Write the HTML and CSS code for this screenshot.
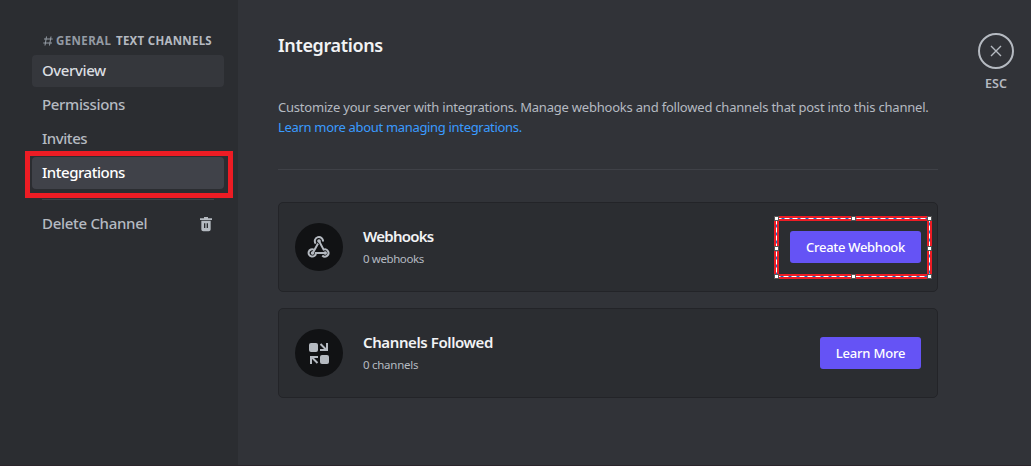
FILE: index.html
```html
<!DOCTYPE html>
<html lang="en">
<head>
<meta charset="utf-8">
<title>Integrations</title>
<link rel="stylesheet" href="styles.css">
</head>
<body>
<div class="app">
  <nav class="sidebar">
    <div class="channel"><svg class="hash" width="10" height="10" viewBox="0 0 10 10"><path d="M3.500 .5 2 9.500M8 .5 6.500 9.500M1 3h8.700M.3 7H9"/></svg><span class="name">GENERAL</span><span class="category">TEXT CHANNELS</span></div>
    <a class="item hovered"><span class="t-overview">Overview</span></a>
    <a class="item"><span class="t-permissions">Permissions</span></a>
    <a class="item"><span class="t-invites">Invites</span></a>
    <a class="item selected"><span class="t-integrations">Integrations</span><i class="highlight"></i></a>
    <div class="separator"></div>
    <a class="item"><span class="t-delete">Delete Channel</span>
      <svg class="trash" width="16" height="16" viewBox="0 0 24 24"><path d="M15 3.500V1.500H9v2H3v2.500h18V3.500z"/><path d="M5 7v13c0 1.700 1.300 3 3 3h8c1.700 0 3-1.300 3-3V7H5zm6 11H9v-7h2v7zm4 0h-2v-7h2v7z"/></svg>
    </a>
  </nav>
  <main class="content">
    <h1><span class="t-title">Integrations</span></h1>
    <p class="intro"><span class="t-intro">Customize your server with integrations. Manage webhooks and followed channels that post into this channel.</span><br><a class="link">Learn more about managing integrations.</a></p>
    <hr>
    <section class="card">
      <div class="circle"><svg width="24" height="24" viewBox="0 0 24 24" class="hook"><path d="M8.700 8.600A4.100 4.100 0 1 1 16 6.500M12 6l4.600 8.600A3.600 3.600 0 1 1 15.300 20.500M11 8.500 6.200 17.200M7 14.600A3.700 3.700 0 1 0 9 18H18"/><circle cx="12" cy="6" r="1.200"/><circle cx="5.600" cy="18" r="1.200"/><circle cx="18.200" cy="18" r="1.200"/></svg></div>
      <div class="info"><h2 class="t-webhooks">Webhooks</h2><p class="t-count">0 webhooks</p></div>
      <button class="create"><span>Create Webhook</span>
        <svg class="selection" width="158" height="63" viewBox="0 0 158 63"><rect class="band" x="2.500" y="2.500" width="153" height="58"/><rect class="line" x="2.500" y="2.500" width="153" height="58"/><rect class="dash" x="2.500" y="2.500" width="153" height="58"/><g class="handles"><rect x=".5" y=".5" width="4" height="4"/><rect x="77.500" y=".5" width="4" height="4"/><rect x="153.500" y=".5" width="4" height="4"/><rect x=".5" y="30.500" width="4" height="4"/><rect x="153.500" y="30.500" width="4" height="4"/><rect x=".5" y="58.500" width="4" height="4"/><rect x="77.500" y="58.500" width="4" height="4"/><rect x="153.500" y="58.500" width="4" height="4"/></g></svg>
      </button>
    </section>
    <section class="card">
      <div class="circle"><svg width="24" height="24" viewBox="0 0 24 24" class="follow"><rect x="2" y="2" width="9" height="9" rx="2"/><rect x="13" y="14" width="9" height="9" rx="2"/><path d="M13.500 3l6 6M20 2v7h-7M10.500 22l-6-6M4 23v-7h7"/></svg></div>
      <div class="info"><h2 class="t-followed">Channels Followed</h2><p class="t-channels">0 channels</p></div>
      <button class="learn"><span>Learn More</span></button>
    </section>
  </main>
  <aside class="close">
    <div class="ring"><svg width="12" height="12" viewBox="0 0 12 12"><path d="M1 1l10 10M11 1 1 11"/></svg></div>
    <span>ESC</span>
  </aside>
</div>
</body>
</html>
```

FILE: styles.css
```css
* { box-sizing: border-box; }
body { margin: 0; background: #313338; font-family: "Noto Sans", sans-serif; color: #b5bac1; }
h1, h2, p { margin: 0; white-space: nowrap; }
.app { display: flex; width: 1031px; height: 466px; overflow: hidden; border-bottom: 1px solid #2b252b; }
.sidebar { width: 238px; padding: 32px 14px 0 32px; background: #2b2d31; }
.channel { display: flex; align-items: center; height: 17px; margin: 0 0 6px 11px; font-size: 11.500px; font-weight: 700; white-space: nowrap; }
.hash { margin-right: 3px; fill: none; stroke: #949ba4; stroke-width: 1; }
.name { width: 60px; color: #949ba4; letter-spacing: .4px; }
.category { letter-spacing: .27px; }
.item { position: relative; display: flex; align-items: center; justify-content: space-between; height: 32px; margin-bottom: 2px; padding: 0 10px; border-radius: 4px; font-size: 15px; font-weight: 500; line-height: 20px; white-space: nowrap; }
.item span { margin-top: -2px; }
.hovered { background: #35373c; color: #dbdee1; }
.selected { background: #404249; color: #fff; }
.t-overview { letter-spacing: -.4px; }
.t-permissions { letter-spacing: -.35px; }
.t-invites { letter-spacing: -.45px; }
.t-integrations { letter-spacing: -.48px; }
.t-delete { letter-spacing: -.3px; }
.highlight { position: absolute; left: -7px; top: -6px; width: 208px; height: 47px; border: 5px solid #ed1c24; }
.separator { height: 1px; margin: 10px 10px 8px; background: #3f4147; }
.trash { fill: #b5bac1; }
.content { width: 700px; padding: 33px 0 0 40px; }
h1 { height: 24px; font-size: 18px; font-weight: 600; line-height: 24px; letter-spacing: -.35px; color: #f2f3f5; }
.intro { height: 40px; margin-top: 40px; font-size: 13px; line-height: 20px; }
.t-intro { letter-spacing: -.21px; }
.link { color: #3a9bff; letter-spacing: -.32px; }
hr { height: 1px; margin: 32px 0; border: 0; background: #3f4147; }
.card { display: flex; align-items: center; height: 90px; margin-bottom: 16px; padding: 0 16px; border: 1px solid #232428; border-radius: 5px; background: #2b2d31; }
.circle { display: flex; align-items: center; justify-content: center; width: 48px; height: 48px; border-radius: 50%; background: #111214; }
.hook { fill: none; stroke: #b5bac1; stroke-width: 2; }
.hook circle { fill: #b5bac1; stroke-width: 1.200; }
.follow { fill: #b5bac1; }
.follow path { fill: none; stroke: #b5bac1; stroke-width: 2; }
.info { flex: 1; margin-left: 20px; }
.info h2 { height: 20px; font-size: 15px; font-weight: 600; line-height: 18px; color: #f2f3f5; }
.info p { margin-top: 4px; font-size: 11.500px; line-height: 16px; }
.info .t-webhooks { letter-spacing: -.75px; }
.info .t-followed { letter-spacing: -.4px; }
.info .t-count { letter-spacing: -.4px; }
.info .t-channels { letter-spacing: -.27px; }
button { position: relative; height: 32px; padding: 0; border: 0; border-radius: 3px; background: #6553f5; color: #fff; font: 500 13px/16px "Noto Sans", sans-serif; white-space: nowrap; }
.create { width: 131px; letter-spacing: -.3px; }
.learn { width: 101px; letter-spacing: -.2px; }
.selection { position: absolute; left: -16px; top: -15px; fill: none; }
.band { stroke: #ed1c24; stroke-width: 5; }
.line { stroke: #1671c9; }
.dash { stroke: #fff; stroke-dasharray: 5 3; }
.handles { fill: #fff; stroke: #555; }
.close { display: flex; flex-direction: column; align-items: center; width: 36px; margin-left: 40px; padding-top: 33px; font-size: 12.500px; font-weight: 600; line-height: 16px; }
.close span { letter-spacing: .1px; }
.ring { display: flex; align-items: center; justify-content: center; width: 36px; height: 36px; margin-bottom: 7px; border: 2px solid #b5bac1; border-radius: 50%; }
.ring path { stroke: #b5bac1; stroke-width: 1.400; }
```
